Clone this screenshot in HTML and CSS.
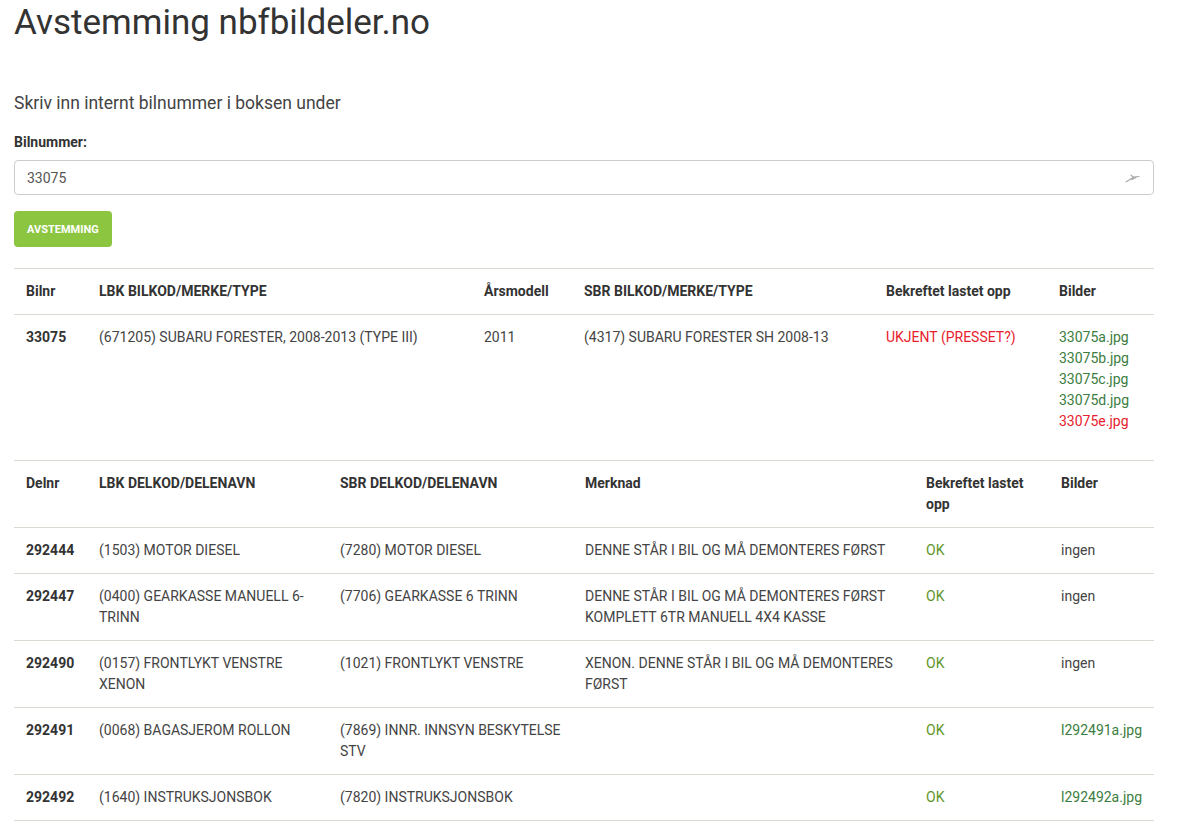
FILE: index.html
```html
<!DOCTYPE html>
<html lang="no">
<head>
<meta charset="utf-8">
<title>Avstemming nbfbildeler.no</title>
<link rel="stylesheet" href="styles.css">
</head>
<body>
<div class="container">
  <h1 class="title">Avstemming nbfbildeler.no</h1>
  <p class="lead">Skriv inn internt bilnummer i boksen under</p>
  <form class="form">
    <label class="label" for="bilnr">Bilnummer:</label>
    <div class="input-wrap">
      <input id="bilnr" class="input" type="text" value="33075">
      <svg class="input-icon" width="16" height="12" viewBox="0 0 16 12"><path d="M1 11 L9 6 M6 4 L8.5 6.5 M8 6 L14 5.5 M7 8.5 L11 6.5" stroke="#aaa" stroke-width="1.1" fill="none" stroke-linecap="round"/></svg>
    </div>
    <button type="button" class="btn">Avstemming</button>
  </form>

  <table class="table table-car">
    <colgroup><col style="width:73px"><col style="width:385px"><col style="width:100px"><col style="width:302px"><col style="width:173px"><col></colgroup>
    <thead>
      <tr><th>Bilnr</th><th>LBK BILKOD/MERKE/TYPE</th><th>Årsmodell</th><th>SBR BILKOD/MERKE/TYPE</th><th>Bekreftet lastet opp</th><th>Bilder</th></tr>
    </thead>
    <tbody>
      <tr>
        <td class="num">33075</td>
        <td>(671205) SUBARU FORESTER, 2008-2013 (TYPE III)</td>
        <td>2011</td>
        <td>(4317) SUBARU FORESTER SH 2008-13</td>
        <td class="bad">UKJENT (PRESSET?)</td>
        <td><div class="imgs"><a class="ok-link">33075a.jpg</a><a class="ok-link">33075b.jpg</a><a class="ok-link">33075c.jpg</a><a class="ok-link">33075d.jpg</a><a class="bad-link">33075e.jpg</a></div></td>
      </tr>
    </tbody>
  </table>

  <table class="table table-parts">
    <colgroup><col style="width:73px"><col style="width:241px"><col style="width:245px"><col style="width:341px"><col style="width:135px"><col></colgroup>
    <thead>
      <tr><th>Delnr</th><th>LBK DELKOD/DELENAVN</th><th>SBR DELKOD/DELENAVN</th><th>Merknad</th><th>Bekreftet lastet opp</th><th>Bilder</th></tr>
    </thead>
    <tbody>
      <tr><td class="num">292444</td><td>(1503) MOTOR DIESEL</td><td>(7280) MOTOR DIESEL</td><td>DENNE STÅR I BIL OG MÅ DEMONTERES FØRST</td><td class="ok">OK</td><td>ingen</td></tr>
      <tr><td class="num">292447</td><td>(0400) GEARKASSE MANUELL 6-TRINN</td><td>(7706) GEARKASSE 6 TRINN</td><td>DENNE STÅR I BIL OG MÅ DEMONTERES FØRST KOMPLETT 6TR MANUELL 4X4 KASSE</td><td class="ok">OK</td><td>ingen</td></tr>
      <tr><td class="num">292490</td><td>(0157) FRONTLYKT VENSTRE XENON</td><td>(1021) FRONTLYKT VENSTRE</td><td>XENON. DENNE STÅR I BIL OG MÅ DEMONTERES FØRST</td><td class="ok">OK</td><td>ingen</td></tr>
      <tr><td class="num">292491</td><td>(0068) BAGASJEROM ROLLON</td><td>(7869) INNR. INNSYN BESKYTELSE STV</td><td></td><td class="ok">OK</td><td><a class="ok-link">l292491a.jpg</a></td></tr>
      <tr><td class="num">292492</td><td>(1640) INSTRUKSJONSBOK</td><td>(7820) INSTRUKSJONSBOK</td><td></td><td class="ok">OK</td><td><a class="ok-link">l292492a.jpg</a></td></tr>
    </tbody>
  </table>
</div>
</body>
</html>
```

FILE: styles.css
```css
* { box-sizing: border-box; }
html, body { margin: 0; padding: 0; background: #fff; }
body {
  font-family: Roboto, "Liberation Sans", Arial, sans-serif;
  font-size: 14px;
  line-height: 21px;
  color: #333;
}
.container {
  width: 1168px;
  padding: 0 14px;
}
.title {
  margin: 3px 0 0;
  font-size: 35px;
  line-height: 40px;
  font-weight: 400;
  color: #333;
}
.lead {
  margin: 48px 0 0;
  font-size: 17.5px;
  line-height: 24px;
  font-weight: 400;
  color: #444;
}
.form { margin-top: 17px; }
.label {
  display: block;
  font-weight: 700;
  font-size: 14px;
  line-height: 20px;
  margin-bottom: 8px;
  color: #333;
}
.input-wrap { position: relative; }
.input {
  display: block;
  width: 100%;
  height: 35px;
  padding: 6px 12px;
  font-family: inherit;
  font-size: 14px;
  color: #555;
  border: 1px solid #ccc;
  border-radius: 4px;
  background: #fff;
  outline: none;
}
.input-icon {
  position: absolute;
  right: 13px;
  top: 11px;
}
.btn {
  margin-top: 16px;
  height: 36px;
  padding: 0 13px;
  background: #8cc540;
  color: #fff;
  border: 0;
  border-radius: 4px;
  font-family: inherit;
  font-size: 11px;
  font-weight: 700;
  text-transform: uppercase;
  letter-spacing: 0;
}
.table {
  width: 1140px;
  border-collapse: collapse;
  table-layout: fixed;
}
.table-car { margin-top: 21px; }
.table th, .table td {
  text-align: left;
  vertical-align: top;
  padding: 12px 12px;
  border-top: 1px solid #dddad3;
}
.table th { font-weight: 700; color: #333; }
.table td { color: #444; }
.table-parts tbody tr:last-child td { border-bottom: 1px solid #dddad3; }
.table td.num { font-weight: 700; color: #333; }
.imgs { display: flex; flex-direction: column; padding-bottom: 16px; }
.ok-link { color: #3b7d3e; text-decoration: none; }
.bad-link { color: #e8212e; text-decoration: none; }
.table td.bad { color: #e8212e; }
.table td.ok { color: #5e962a; }
```
